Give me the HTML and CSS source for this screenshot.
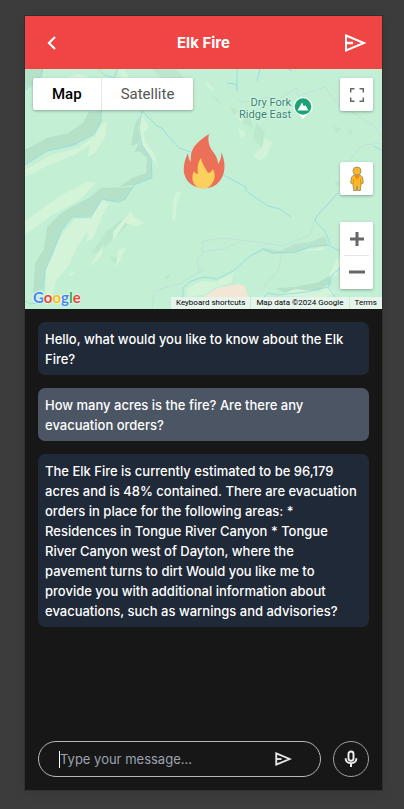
FILE: index.html
```html
<!DOCTYPE html>
<html lang="en">
<head>
<meta charset="utf-8">
<meta name="viewport" content="width=device-width, initial-scale=1">
<title>Elk Fire</title>
<link rel="stylesheet" href="styles.css">
</head>
<body>
<div class="phone">
  <header class="header">
    <button class="icon-button" type="button" aria-label="Back">
      <svg width="24" height="24" viewBox="0 0 24 24" fill="none" stroke="#fff" stroke-width="2.2"><path d="M15 6 9 12l6 6"/></svg>
    </button>
    <h1 class="title">Elk Fire</h1>
    <button class="icon-button" type="button" aria-label="Share">
      <svg width="24" height="24" viewBox="0 0 24 24" fill="none" stroke="#fff" stroke-width="2"><path d="M3 4.500 21 12 3 19.500z"/><path d="M3 12h7" stroke-width="2.500"/></svg>
    </button>
  </header>

  <section class="map" aria-label="Map">
    <svg class="terrain" viewBox="0 0 357 240" preserveAspectRatio="xMidYMid slice" aria-hidden="true">
      <rect width="357" height="240" fill="#c3f0d5"/>
      <g fill="#b5e1c8">
        <path d="M0 81 22 69 43 64 58 54 64 43 77 42 76 54 68 65 49 76 22 82 0 96z"/>
        <path d="M0 0h18L15 10 4 17 0 20z"/>
        <path d="M128 0h22l10 9 9 14-8-3-6 6-8-14-12-4z" opacity=".6"/>
        <path d="m110 55 6-9-1 14 2 16 9 13 1 20-18 7-15 2 13-9 14-5 1-15-8-7-5 2 5-10-8 3z"/>
        <path d="m76 119 32-1-8 13-13 2-10-3-11 17-19 1-11 14-9 24-7 14-2 20-10 4 2-30 9-14 3-22 12-12 12-8 18-9z"/>
        <path d="m82 162 14-11 9 2-15 16-13 12-12 5z" opacity=".6"/>
        <path d="m225 188 13-7 10 4 22-1 15-6 18-2-3-9-14 6-17 2-14 7-17-3z" opacity=".8"/>
        <path d="m250 219 20-1 24-5 10-6 3 8-12 6-16 1-17 3z"/>
        <path d="m205 38 8 3-4 5zm12 7 8 4 3 10-10-4zm14 9 9 9-2 16-10-9zm-44-27 7 4 3 6zm123 85 8 2-7 4z" opacity=".5"/>
        <path d="m309 57 8 3-6 4zm13 6 5-3-1 7zm-183 145 7-3-4 6zm-56-25 5 6 8-2-7 8z" opacity=".5"/>
      </g>
      <g fill="#d4f4d9">
        <path d="m14 37 15-18 7-8 17-6 10 3-8 12-20 11-18 9z"/>
        <path d="m0 101 24-14 29-8 17-12 8-13 4-2-2 16-9 15-8 5 2-12-16 10-25 10-24 12z"/>
        <path d="m0 166 24-18 32-18 15-16-9-1-25 13-15 10-22 16z"/>
        <path d="m21 201 8-21 11-19 10-11 15-1 12-18 7 4-6 10-10 24-6 4 1-12-11 18-8 17-13 16-4 15-6 11z"/>
        <path d="m116 44 8 14-6 6 3 9 9 13 2 10-6-7-10-14-3-16z"/>
        <path d="m88 163 18-21 3 6 10 6-7 3-12-3-12 18zM65 196l14-21-4 14-13 10zm28-15 8-2-10 20zM44 205l8-4-7 6z"/>
        <path d="M151 123l5 0-4 14-2 16-3-4 1-15zM213 58l9 7-6 5zm26 11 8 4-5 14-8 5-6-6 9-7zm-28-23 8 4-3 3z" opacity=".8"/>
        <path d="m161 220 15-8 15 1 18-10-3 11-15 4-10 7-18 3z"/>
        <path d="m254 226 17-6 22 3 9-7 8 8-13 5zm50-20 8-17 4 4-5 14z"/>
        <path d="m180 12 10 9-6-2zm96 170 24-4-1 3zM93 2l8 16 9 10-4-16-7-12zm14 6 11 14 3 8-11-10z"/>
      </g>
      <path fill="#f3e6d5" d="m179 228 13-9 22-4 5 2 5 12z"/>
      <g fill="none" stroke="#c3e0da" stroke-width="1">
        <path d="m212 29 5 5 26-6 8 4 21-13 1 8 27-9 12 17 13 7 23 14 9 12M325 92l7-11 8-5 17-2"/>
        <path d="m177 183 1-11 20-3 34 4 26 4 27-11 5-17 10-10 12-15M177 183l22-3 15-7M257 184l-4 18-18 20"/>
        <path d="m174 204-2-14 7-7M179 200l-23 14-27 8-2 18"/>
      </g>
      <g fill="none" stroke="#9cdde0" stroke-width="1" stroke-linejoin="round">
        <path d="m0 96 22-14 27-6 20-11 7-13V40M74 0l5 6 5 1 5 2 3-8M0 21l6-4 10-8 2-9"/>
        <path d="m117 42 15 15 5 2 7 9 10 11 12 4 18 15 14 8 10 5 13 7v4l22 15 12 3 11 8"/>
        <path d="m117 42-3 17 3 17 9 13 1 20-18 7-9 14-6 3-17-3-11 18H47l-11 14-9 24-7 15-2 21M0 232l5 3 7-1"/>
        <path d="M158 232v-13l8-7 13-4 13 2 16-8 17-15 13-7 9 4 23-1 15-5 18-2 12 6"/>
        <path d="m313 124-21 23-2 5 10 10 5 13M238 229l5-5 10 2 29-3 21-5 4-12 8-7M303 218l9 13"/>
        <path d="M212 0v22l-1-7-9-1M235 0l-3 12M348 77l9 4M263 0l4 2"/>
      </g>
    </svg>

    <svg class="fire" width="42" height="55" viewBox="0 0 42 55" role="img" aria-label="Fire location">
      <path fill="#ec6f57" d="M26 0c-2 8 1 14 5 19 3 4 4 8 4 11 2-3 4-7 3-12 7 14 3 28-7 34-6 3-14 3-20 0C-2 45-1 31 5 19c0 4 1 7 3 9C6 13 16 7 26 0z"/>
      <path fill="#fbd05c" d="M18 24c1 6 4 9 7 15 2 0 4-2 5-4 4 8 0 14-4 18-4 2-9 2-12 0-5-4-6-10-3-16 1 2 2 3 4 3-1-7 0-12 3-16z"/>
    </svg>

    <div class="place">
      <span class="place-name">Dry Fork<br>Ridge East</span>
      <svg width="20" height="25" viewBox="0 0 20 25" aria-hidden="true"><path fill="#fff" d="M10 1a9.500 9.500 0 0 1 9.500 9.500c0 5-4 7-6.500 9l-3 3.500-3-3.500c-2.500-2-6.500-4-6.500-9A9.500 9.500 0 0 1 10 1z"/><circle cx="10" cy="10.500" r="8.300" fill="#1aa374"/><path fill="#fff" d="m4.500 14.500 4.500-8 2 4 1.300-1.500 3.200 5.500z"/></svg>
    </div>

    <div class="map-types">
      <button class="map-type active" type="button">Map</button>
      <button class="map-type" type="button">Satellite</button>
    </div>

    <div class="map-tools">
      <button class="tool" type="button" aria-label="Toggle fullscreen">
        <svg width="16" height="16" viewBox="0 0 16 16" fill="none" stroke="#666" stroke-width="1.500"><path d="M1.700 5.500V1.700h3.800M10.500 1.700h3.800v3.800M14.300 10.500v3.800h-3.800M5.500 14.300H1.700v-3.800"/></svg>
      </button>
      <button class="tool pegman" type="button" aria-label="Street View">
        <svg width="16" height="26" viewBox="0 0 16 26"><path d="M5 9h6l2.500 2 .8 6-2.300 1-.6 6.500H8.500L8 20l-.5 4.500H4.600L4 18l-2.300-1 .8-6z" fill="#fbb724" stroke="#8f8368" stroke-width=".8"/><circle cx="8" cy="5" r="4" fill="#fbb724" stroke="#8f8368" stroke-width=".8"/><path d="M5 9.500 8 14l3-4.500z" fill="#ec8927"/><path d="M4.500 13v5M11.500 13v5" stroke="#c6902b" stroke-width=".7"/></svg>
      </button>
      <div class="zoom">
        <button class="tool" type="button" aria-label="Zoom in"><svg width="16" height="16" viewBox="0 0 16 16" stroke="#666" stroke-width="3"><path d="M8 1v14M1 8h14"/></svg></button>
        <button class="tool" type="button" aria-label="Zoom out"><svg width="16" height="16" viewBox="0 0 16 16" stroke="#666" stroke-width="3"><path d="M0 8h16"/></svg></button>
      </div>
    </div>

    <a class="google" href="#"><span class="blue">G</span><span class="red">o</span><span class="yellow">o</span><span class="blue">g</span><span class="green">l</span><span class="red">e</span></a>
    <div class="credits">
      <button class="credit" type="button">Keyboard shortcuts</button>
      <span class="credit">Map data ©2024 Google</span>
      <a class="credit" href="#">Terms</a>
    </div>
  </section>

  <main class="chat">
    <p class="message">Hello, what would you like to know about the Elk Fire?</p>
    <p class="message user">How many acres is the fire? Are there any evacuation orders?</p>
    <p class="message">The Elk Fire is currently estimated to be 96,179 acres and is 48% contained. There are evacuation orders in place for the following areas: * Residences in Tongue River Canyon * Tongue River Canyon west of Dayton, where the pavement turns to dirt Would you like me to provide you with additional information about evacuations, such as warnings and advisories?</p>
  </main>

  <form class="composer">
    <div class="field">
      <input class="input" type="text" aria-label="Message" placeholder="Type your message...">
      <button class="icon-button" type="button" aria-label="Send">
        <svg width="18" height="18" viewBox="0 0 24 24" fill="none" stroke="#e8e8e8" stroke-width="2.500"><path d="M3 4.500 21 12 3 19.500z"/><path d="M3 12h7"/></svg>
      </button>
    </div>
    <button class="mic" type="button" aria-label="Voice input">
      <svg width="20" height="20" viewBox="0 0 24 24" fill="none" stroke="#f0f0f0" stroke-width="2.300"><rect x="9" y="3" width="6" height="11" rx="3"/><path d="M5.500 11c0 8 13 8 13 0M12 17v4.500"/></svg>
    </button>
  </form>
</div>
</body>
</html>
```
FILE: styles.css
```css
* {
  box-sizing: border-box;
}

body {
  margin: 0;
  min-height: 100vh;
  padding: 16px 22px 19px 25px;
  display: flex;
  background: #3c3c3c;
  font-family: Inter, "Liberation Sans", sans-serif;
  color: #fff;
}

button {
  border: 0;
  padding: 0;
  background: none;
  font: inherit;
  color: inherit;
  cursor: pointer;
}

svg {
  display: block;
}

.phone {
  flex: 1;
  min-width: 0;
  display: flex;
  flex-direction: column;
  background: #171717;
  box-shadow: 0 0 0 1px #303030, 0 2px 12px #00000018;
}

.header {
  display: flex;
  align-items: center;
  justify-content: space-between;
  height: 53px;
  padding: 0 15px;
  background: #f04545;
}

.title {
  margin: 0;
  font-size: 15px;
  font-weight: 700;
}

.map {
  position: relative;
  height: 240px;
  overflow: hidden;
  font-family: Roboto, "Liberation Sans", sans-serif;
}

.terrain {
  width: 100%;
  height: 100%;
}

.fire {
  position: absolute;
  left: calc(50% - 21px);
  top: 65px;
}

.place {
  position: absolute;
  top: 27px;
  right: 69px;
  display: flex;
  align-items: center;
  gap: 2px;
}

.place-name {
  font-size: 11px;
  line-height: 12px;
  text-align: right;
  color: #2b8469;
  text-shadow: 0 0 2px #fff, 0 0 1px #fff;
}

.map-types {
  position: absolute;
  top: 9px;
  left: 8px;
  display: flex;
  background: #fff;
  border-radius: 2px;
  box-shadow: 0 1px 3px #0000004d;
}

.map-type {
  height: 32px;
  padding: 0 19px;
  font-size: 15px;
  color: #565656;
}

.map-type.active {
  color: #000;
  font-weight: 500;
  border-right: 1px solid #e6e6e6;
}

.map-tools {
  position: absolute;
  top: 9px;
  right: 9px;
}

.tool {
  display: flex;
  align-items: center;
  justify-content: center;
  width: 33px;
  height: 33px;
  background: #fff;
  border-radius: 2px;
  box-shadow: 0 1px 3px #0000004d;
}

.pegman {
  margin: 51px 0 27px;
}

.zoom {
  background: #fff;
  border-radius: 2px;
  box-shadow: 0 1px 3px #0000004d;
}

.zoom .tool {
  box-shadow: none;
}

.zoom .tool + .tool {
  position: relative;
  height: 34px;
}

.zoom .tool + .tool::before {
  content: "";
  position: absolute;
  top: 0;
  left: 4px;
  right: 4px;
  border-top: 1px solid #e6e6e6;
}

.google {
  position: absolute;
  left: 8px;
  bottom: 2px;
  font-family: Lato, sans-serif;
  font-size: 15px;
  font-weight: 700;
  line-height: 20px;
  text-decoration: none;
  text-shadow: 0 0 2px #fff, 0 0 1px #fff;
}

.blue {
  color: #4285f4;
}

.red {
  color: #ea4335;
}

.yellow {
  color: #fbbc04;
}

.green {
  color: #34a853;
}

.credits {
  position: absolute;
  right: 0;
  bottom: 0;
  display: flex;
  gap: 1px;
}

.credit {
  height: 12px;
  padding: 0 5px;
  background: #f5f5f5b3;
  font-size: 8px;
  line-height: 12px;
  color: #000;
  text-decoration: none;
  white-space: nowrap;
}

.chat {
  flex: 1;
  display: flex;
  flex-direction: column;
  gap: 13px;
  padding: 13px;
}

.message {
  margin: 0;
  padding: 7px 11px 6px 7px;
  border-radius: 7px;
  background: #1f2937;
  font-size: 13px;
  font-weight: 500;
  line-height: 20px;
}

.message.user {
  background: #4b5563;
}

.composer {
  display: flex;
  gap: 12px;
  padding: 13px;
}

.field {
  flex: 1;
  min-width: 0;
  display: flex;
  align-items: center;
  height: 36px;
  padding: 0 28px 0 20px;
  border: 1px solid #b8b8b8;
  border-radius: 18px;
}

.input {
  flex: 1;
  min-width: 0;
  height: 17px;
  padding: 0;
  border: 0;
  border-left: 1px solid #fff;
  outline: 0;
  background: none;
  color: #fff;
  font: 400 13px/17px Inter, sans-serif;
}

.input::placeholder {
  color: #9ca3af;
  opacity: 1;
}

.mic {
  display: flex;
  align-items: center;
  justify-content: center;
  width: 36px;
  height: 36px;
  border: 1px solid #a0a0a0;
  border-radius: 50%;
}
```
